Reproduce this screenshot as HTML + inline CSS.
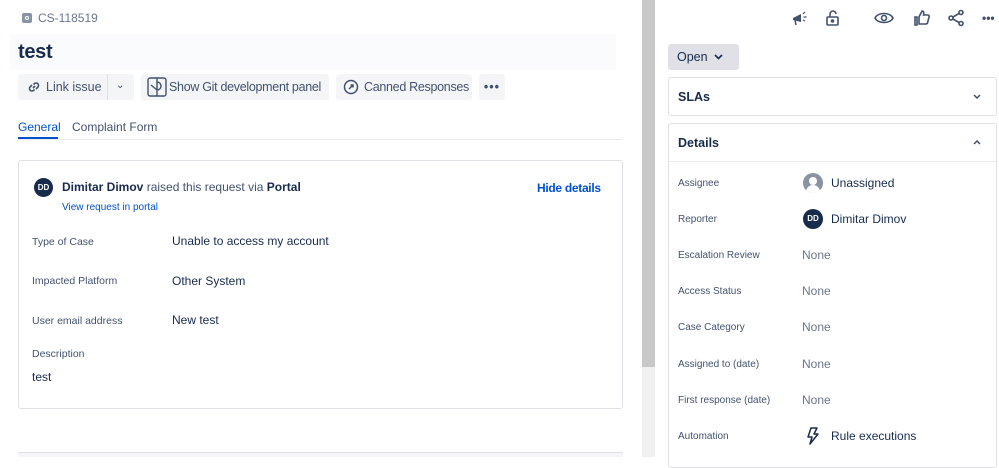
<!DOCTYPE html>
<html><head><meta charset="utf-8"><style>
*{box-sizing:border-box;margin:0;padding:0}
body{width:999px;height:457px;overflow:hidden;background:#fff;font-family:"Liberation Sans",sans-serif;color:#172b4d;position:relative}
.a{position:absolute}
.btn{position:absolute;background:#f4f5f7;border-radius:3px;height:26px;top:74px;font-size:12.5px;line-height:26px;color:#42526e}
.lbl{position:absolute;font-size:10.5px;color:#42526e}
.val{position:absolute;font-size:12px;color:#172b4d}
.rl{position:absolute;left:678px;font-size:10px;color:#42526e}
.rv{position:absolute;left:802px;font-size:12px;color:#6b778c}
.av{position:absolute;width:19px;height:19px;border-radius:50%;background:#172b4d;color:#fff;font-size:8px;font-weight:bold;text-align:center;line-height:19px}
svg{position:absolute}
</style></head><body>
<div class="a" style="left:22px;top:13px;width:10px;height:10px;background:#8993a4;border-radius:2px"></div>
<div class="a" style="left:25px;top:16px;width:4px;height:4px;border:1px solid #fff;border-radius:50%"></div>
<div class="a" style="left:38px;top:11px;font-size:12px;color:#6b778c">CS-118519</div>
<div class="a" style="left:10px;top:34px;width:606px;height:36px;background:#fafbfc"></div>
<div class="a" style="left:18px;top:41px;font-size:20px;color:#172b4d;font-weight:bold;letter-spacing:-0.3px">test</div>

<div class="btn" style="left:18px;width:116px"></div>
<div class="a" style="left:107px;top:74px;width:1px;height:26px;background:#dfe1e6"></div>
<svg style="left:26px;top:79px" width="16" height="16" viewBox="0 0 16 16" fill="none" stroke="#42526e" stroke-width="1.6"><path d="M7 9l2-2M6 6l-2 2a2.5 2.5 0 003.5 3.5l1-1M10 10l2-2A2.5 2.5 0 008.5 4.5l-1 1"/></svg>
<div class="a" style="left:46px;top:74px;font-size:12.5px;line-height:26px;color:#42526e">Link issue</div>
<div class="a" style="left:116px;top:80px;font-size:10px;color:#42526e">&#8964;</div>
<div class="btn" style="left:141px;width:188px"></div>
<svg style="left:147px;top:77px" width="20" height="20" viewBox="0 0 20 20" fill="none" stroke="#42526e" stroke-width="1.4"><rect x="1" y="1" width="18" height="18" rx="2"/><path d="M10 1v18M4 8l6 5M10 5a4 4 0 010 8"/></svg>
<div class="a" style="left:169px;top:74px;font-size:12.5px;line-height:26px;color:#42526e;letter-spacing:-0.3px">Show Git development panel</div>
<div class="btn" style="left:336px;width:136px"></div>
<svg style="left:343px;top:79px" width="16" height="16" viewBox="0 0 16 16" fill="none" stroke="#42526e" stroke-width="1.5"><circle cx="8" cy="8" r="6.5"/><path d="M6 10l4-4M7.5 6H10v2.5"/></svg>
<div class="a" style="left:364px;top:74px;font-size:12.5px;line-height:26px;color:#42526e;letter-spacing:-0.3px">Canned Responses</div>
<div class="btn" style="left:479px;width:26px;text-align:center;font-weight:bold;letter-spacing:1px">•••</div>

<div class="a" style="left:18px;top:120px;font-size:12px;color:#0052cc">General</div>
<div class="a" style="left:18px;top:137px;width:40px;height:2px;background:#0052cc"></div>
<div class="a" style="left:72px;top:120px;font-size:12px;color:#42526e">Complaint Form</div>
<div class="a" style="left:18px;top:139px;width:604px;height:1px;background:#ebecf0"></div>

<div class="a" style="left:18px;top:160px;width:605px;height:249px;border:1px solid #dfe1e6;border-radius:3px"></div>
<div class="av" style="left:34px;top:178px">DD</div>
<div class="a" style="left:62px;top:180px;font-size:12px;color:#42526e"><b style="color:#172b4d">Dimitar Dimov</b> raised this request via <b style="color:#172b4d">Portal</b></div>
<div class="a" style="left:62px;top:202px;font-size:10px;color:#0052cc">View request in portal</div>
<div class="a" style="left:537px;top:181px;font-size:12px;color:#0052cc;font-weight:bold;letter-spacing:-0.3px">Hide details</div>
<div class="lbl" style="left:32px;top:236px">Type of Case</div><div class="val" style="left:172px;top:234px">Unable to access my account</div>
<div class="lbl" style="left:32px;top:275px">Impacted Platform</div><div class="val" style="left:172px;top:274px">Other System</div>
<div class="lbl" style="left:32px;top:315px">User email address</div><div class="val" style="left:172px;top:313px">New test</div>
<div class="lbl" style="left:32px;top:348px">Description</div><div class="val" style="left:32px;top:370px">test</div>
<div class="a" style="left:18px;top:452px;width:605px;height:5px;background:#f4f5f7;border-top:1px solid #dfe1e6"></div>

<div class="a" style="left:642px;top:0;width:13px;height:457px;background:#f0f0f0"></div>
<div class="a" style="left:642px;top:0;width:13px;height:367px;background:#c8c8c8"></div>

<svg style="left:791px;top:10px" width="18" height="18" viewBox="0 0 18 18" fill="#42526e"><path d="M2 8l8-4v8L2 10z"/><path d="M4 10l1 5" stroke="#42526e" stroke-width="1.5"/><path d="M12 4l2-2M12.5 7h3M12 10l2 1" stroke="#42526e" stroke-width="1.2"/></svg>
<svg style="left:825px;top:9px" width="16" height="18" viewBox="0 0 16 18" fill="none" stroke="#42526e" stroke-width="1.6"><rect x="2" y="8" width="11" height="8" rx="1"/><path d="M5 8V5a3 3 0 016 0"/><circle cx="7.5" cy="12" r="1" fill="#42526e"/></svg>
<svg style="left:874px;top:10px" width="20" height="16" viewBox="0 0 20 16" fill="none" stroke="#42526e" stroke-width="1.6"><path d="M1 8c3-6 15-6 18 0c-3 6-15 6-18 0z"/><circle cx="10" cy="8" r="2.5"/></svg>
<svg style="left:913px;top:9px" width="18" height="18" viewBox="0 0 18 18" fill="none" stroke="#42526e" stroke-width="1.6"><path d="M2 8h2v8H2zM6 8l3-6c2 0 2 2 1.5 4H15c1 0 1.5 1 1 2l-1.5 6c-.3 1-1 1-2 1H6z"/></svg>
<svg style="left:947px;top:9px" width="18" height="18" viewBox="0 0 18 18" fill="none" stroke="#42526e" stroke-width="1.6"><circle cx="4" cy="9" r="2"/><circle cx="14" cy="3.5" r="2"/><circle cx="14" cy="14.5" r="2"/><path d="M6 8l6-3.5M6 10l6 3.5"/></svg>
<div class="a" style="left:982px;top:11px;font-size:12px;font-weight:bold;color:#42526e">•••</div>

<div class="a" style="left:668px;top:44px;width:71px;height:26px;background:#dfe1e6;border-radius:3px;font-size:12.5px;line-height:26px;padding-left:9px;color:#172b4d">Open</div>
<svg style="left:714px;top:54px" width="9" height="6" viewBox="0 0 9 6" fill="none" stroke="#172b4d" stroke-width="1.6"><path d="M1 1l3.5 3.5L8 1"/></svg>
<div class="a" style="left:668px;top:77px;width:329px;height:39px;border:1px solid #dfe1e6;border-radius:3px"></div>
<div class="a" style="left:678px;top:90px;font-size:12.5px;font-weight:bold">SLAs</div>
<svg style="left:973px;top:94px" width="8" height="5" viewBox="0 0 8 5" fill="none" stroke="#42526e" stroke-width="1.5"><path d="M1 1l3 3 3-3"/></svg>
<div class="a" style="left:668px;top:123px;width:329px;height:345px;border:1px solid #dfe1e6;border-radius:3px"></div>
<div class="a" style="left:669px;top:161px;width:327px;height:1px;background:#ebecf0"></div>
<div class="a" style="left:678px;top:136px;font-size:12.5px;font-weight:bold">Details</div>
<svg style="left:973px;top:140px" width="8" height="5" viewBox="0 0 8 5" fill="none" stroke="#42526e" stroke-width="1.5"><path d="M1 4l3-3 3 3"/></svg>

<div class="rl" style="top:178px">Assignee</div>
<div class="a" style="left:803px;top:173px;width:20px;height:20px;border-radius:50%;background:#8993a4;overflow:hidden"><div class="a" style="left:6px;top:4px;width:8px;height:8px;border-radius:50%;background:#fff"></div><div class="a" style="left:3px;top:12px;width:14px;height:10px;border-radius:7px 7px 0 0;background:#fff"></div></div>
<div class="a" style="left:831px;top:176px;font-size:12px;color:#172b4d">Unassigned</div>
<div class="rl" style="top:214px">Reporter</div>
<div class="av" style="left:803px;top:209px;width:20px;height:20px;line-height:20px">DD</div>
<div class="a" style="left:831px;top:212px;font-size:12px;color:#172b4d">Dimitar Dimov</div>
<div class="rl" style="top:250px">Escalation Review</div><div class="rv" style="top:248px">None</div>
<div class="rl" style="top:286px">Access Status</div><div class="rv" style="top:284px">None</div>
<div class="rl" style="top:322px">Case Category</div><div class="rv" style="top:320px">None</div>
<div class="rl" style="top:359px">Assigned to (date)</div><div class="rv" style="top:357px">None</div>
<div class="rl" style="top:395px">First response (date)</div><div class="rv" style="top:393px">None</div>
<div class="rl" style="top:431px">Automation</div>
<svg style="left:806px;top:427px" width="14" height="18" viewBox="0 0 14 18" fill="none" stroke="#172b4d" stroke-width="1.5" stroke-linejoin="round"><path d="M5 1h6L8 7h4L4 17l2-7H2z"/></svg>
<div class="a" style="left:831px;top:429px;font-size:12px;color:#172b4d">Rule executions</div>
</body></html>
